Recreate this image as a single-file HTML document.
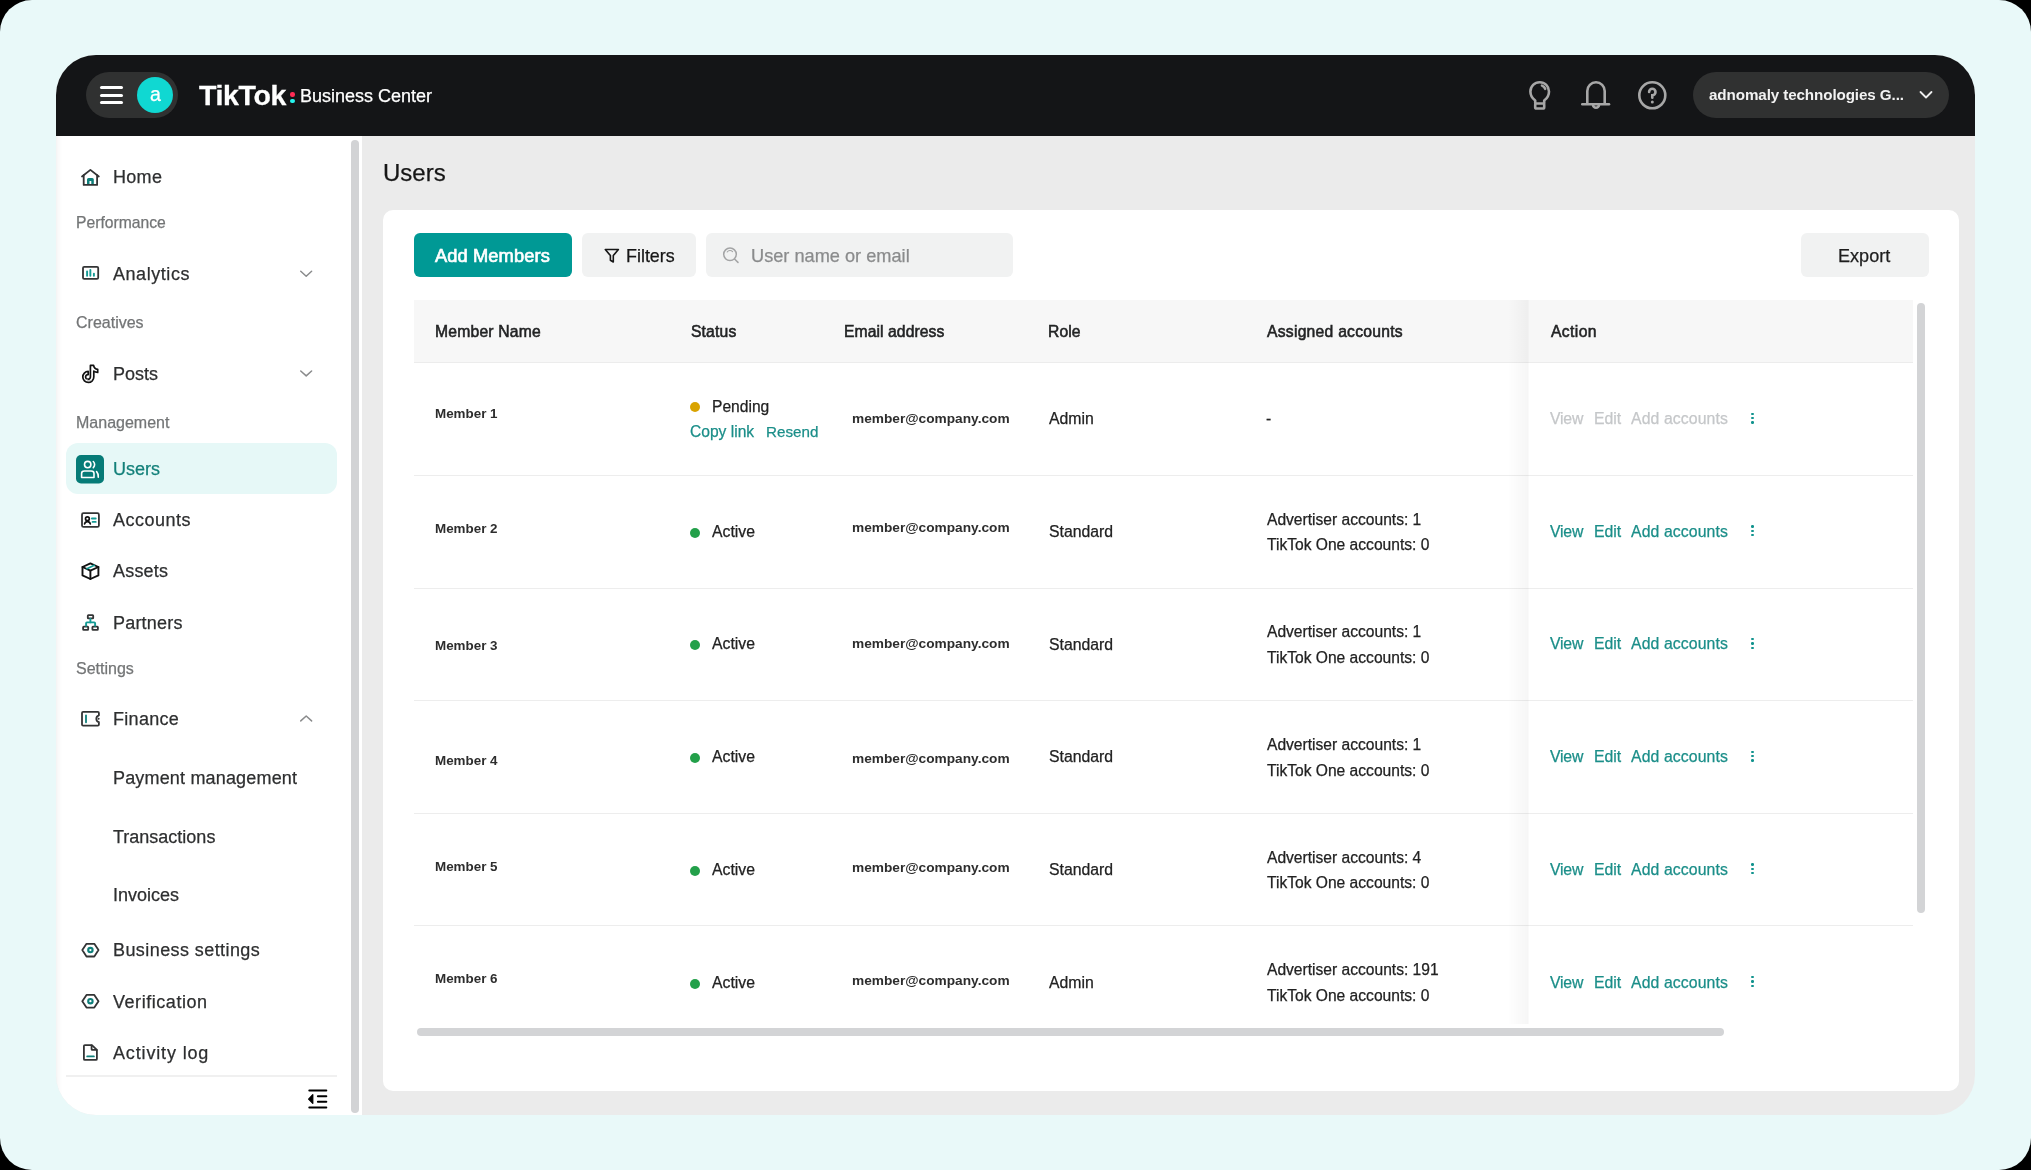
<!DOCTYPE html>
<html><head><meta charset="utf-8">
<style>
*{box-sizing:border-box;margin:0;padding:0}
html,body{width:2031px;height:1170px;overflow:hidden;background:#000;font-family:"Liberation Sans",sans-serif}
.abs{position:absolute}
.t{position:absolute;white-space:nowrap;line-height:1;will-change:transform;-webkit-text-stroke:0.25px currentColor}
svg{position:absolute;overflow:visible}
#frame{position:absolute;left:0;top:0;width:2031px;height:1170px;border-radius:32px;background:#E9F9F9;overflow:hidden}
#app{position:absolute;left:56px;top:55px;width:1919px;height:1060px;border-radius:40px;overflow:hidden;background:#EBEBEB}
#hdr{position:absolute;left:0;top:0;width:1919px;height:81px;background:#141517}
#side{position:absolute;left:0;top:81px;width:306px;height:979px;background:#fff;box-shadow:inset 7px 0 6px -6px rgba(0,0,0,0.07)}
#abs0{position:absolute;left:0;top:0;width:2031px;height:1170px}
</style></head>
<body>
<div id="frame">
<div id="app">
  <div id="hdr"></div>
  <div id="side"></div>
</div>
<div id="abs0">
<div class="abs" style="left:86px;top:72px;width:92px;height:46px;border-radius:23px;background:#303131"></div>
<div class="abs" style="left:100px;top:86px;width:23px;height:3px;border-radius:1.5px;background:#fff"></div>
<div class="abs" style="left:100px;top:94px;width:23px;height:3px;border-radius:1.5px;background:#fff"></div>
<div class="abs" style="left:100px;top:101px;width:23px;height:3px;border-radius:1.5px;background:#fff"></div>
<div class="abs" style="left:137px;top:77px;width:36px;height:36px;border-radius:50%;background:#10D8D2"></div>
<div class="t" style="left:149.8px;top:85.2px;font-size:19.6px;color:#fff">a</div>
<div class="t" style="left:199px;top:80.81px;font-size:28.5px;font-weight:700;-webkit-text-stroke:0;color:#fff;letter-spacing:-0.35px;-webkit-text-stroke:0.3px #fff">TikTok</div>
<div class="abs" style="left:290.3px;top:92.2px;width:4.4px;height:4.4px;border-radius:50%;background:#FE2C55"></div>
<div class="abs" style="left:290.3px;top:98.6px;width:4.4px;height:4.4px;border-radius:50%;background:#25F4EE"></div>
<div class="t" style="left:300px;top:87.11px;font-size:18px;color:#fff;">Business Center</div>
<svg style="left:1527px;top:79px" width="26" height="33" viewBox="0 0 26 33"><g fill="none" stroke="#A7A7A7" stroke-width="2.6" stroke-linecap="round" stroke-linejoin="round">
<path d="M8.2 24 V21.5 C5.5 19.5 3.4 16.5 3.4 12.5 A9.3 9.3 0 0 1 22 12.5 C22 16.5 19.9 19.5 17.2 21.5 V24"/>
<rect x="8.2" y="24.5" width="9" height="5" rx="1.3"/>
<path d="M15 6.6 A5.8 5.8 0 0 1 18.2 9.8"/></g></svg>
<svg style="left:1580px;top:79px" width="32" height="33" viewBox="0 0 32 33"><g fill="none" stroke="#A7A7A7" stroke-width="2.6" stroke-linecap="round" stroke-linejoin="round">
<path d="M7.3 24.5 V12 A8.7 8.7 0 0 1 24.7 12 V24.5"/><path d="M2.3 25.3 H29"/><path d="M13 25.8 A3 3 0 0 0 19 25.8"/></g></svg>
<svg style="left:1636px;top:79px" width="33" height="33" viewBox="0 0 33 33"><g fill="none" stroke="#A7A7A7" stroke-width="2.6" stroke-linecap="round">
<circle cx="16.3" cy="16.3" r="13"/><path d="M13.1 13 A3.2 3.2 0 1 1 16.3 16.2 V18.8"/></g><circle cx="16.3" cy="22.9" r="1.5" fill="#A7A7A7"/></svg>
<div class="abs" style="left:1693px;top:72px;width:256px;height:46px;border-radius:23px;background:#303131"></div>
<div class="t" style="left:1708.8px;top:87.32px;font-size:15.2px;font-weight:700;-webkit-text-stroke:0;color:#F2F2F2;letter-spacing:-0.1px">adnomaly technologies G...</div>
<svg style="left:1919px;top:90px" width="14" height="10" viewBox="0 0 14 10"><path d="M1.5 2 L7 7.5 L12.5 2" fill="none" stroke="#EDEDED" stroke-width="1.8" stroke-linecap="round" stroke-linejoin="round"/></svg>
<div class="abs" style="left:351px;top:140px;width:8px;height:973px;border-radius:4px;background:#D2D3D5"></div>
<div class="t" style="left:113px;top:167.91px;font-size:18px;color:#2E2F30;letter-spacing:0.3px">Home</div>
<div class="t" style="left:75.8px;top:215.27px;font-size:15.7px;color:#737576;">Performance</div>
<div class="t" style="left:113px;top:264.61px;font-size:18px;color:#2E2F30;letter-spacing:0.55px">Analytics</div>
<div class="t" style="left:75.5px;top:315.17px;font-size:16px;color:#737576;">Creatives</div>
<div class="t" style="left:113px;top:364.51px;font-size:18px;color:#2E2F30;">Posts</div>
<div class="t" style="left:75.5px;top:415.27px;font-size:16px;color:#737576;">Management</div>
<div class="abs" style="left:66px;top:443px;width:271px;height:51px;border-radius:12px;background:#E6F8F7"></div>
<div class="t" style="left:113px;top:460.11px;font-size:18px;color:#13807A;">Users</div>
<div class="t" style="left:113px;top:511.16px;font-size:18px;color:#2E2F30;letter-spacing:0.5px">Accounts</div>
<div class="t" style="left:113px;top:562.46px;font-size:18px;color:#2E2F30;letter-spacing:0.2px">Assets</div>
<div class="t" style="left:113px;top:613.71px;font-size:18px;color:#2E2F30;letter-spacing:0.2px">Partners</div>
<div class="t" style="left:75.5px;top:660.87px;font-size:16px;color:#737576;">Settings</div>
<div class="t" style="left:113px;top:710.16px;font-size:18px;color:#2E2F30;letter-spacing:0.3px">Finance</div>
<div class="t" style="left:113px;top:768.86px;font-size:18px;color:#2E2F30;letter-spacing:0.17px">Payment management</div>
<div class="t" style="left:113px;top:827.71px;font-size:18px;color:#2E2F30;">Transactions</div>
<div class="t" style="left:113px;top:886.36px;font-size:18px;color:#2E2F30;">Invoices</div>
<div class="t" style="left:113px;top:941.26px;font-size:18px;color:#2E2F30;letter-spacing:0.42px">Business settings</div>
<div class="t" style="left:113px;top:992.56px;font-size:18px;color:#2E2F30;letter-spacing:0.55px">Verification</div>
<div class="t" style="left:113px;top:1043.86px;font-size:18px;color:#2E2F30;letter-spacing:0.85px">Activity log</div>
<div class="abs" style="left:66px;top:1075px;width:271px;height:2px;background:#F0F0F0"></div>
<svg style="left:0;top:0" width="2031" height="1170"><path d="M300.75 271.3 L306.2 276.2 L311.6 271.3" fill="none" stroke="#8A8B8C" stroke-width="1.5" stroke-linecap="round" stroke-linejoin="round"/></svg>
<svg style="left:0;top:0" width="2031" height="1170"><path d="M300.75 371.0 L306.2 375.9 L311.6 371.0" fill="none" stroke="#8A8B8C" stroke-width="1.5" stroke-linecap="round" stroke-linejoin="round"/></svg>
<svg style="left:0;top:0" width="2031" height="1170"><path d="M300.75 720.9 L306.2 716.0 L311.6 720.9" fill="none" stroke="#8A8B8C" stroke-width="1.5" stroke-linecap="round" stroke-linejoin="round"/></svg>
<svg style="left:0;top:0" width="2031" height="1170">
<g stroke="#333435" stroke-width="1.8" fill="none" stroke-linecap="round" stroke-linejoin="round"><path d="M82 176.5 L90.4 169.9 L98.8 176.5"/><path d="M83.7 175.2 V184.9 H97.1 V175.2"/></g>
<path d="M87 184 V179.5 Q87 178 88.5 178 H92.3 Q93.8 178 93.8 179.5 V184 H91.3 V181 H89.5 V184 Z" fill="#0F7F7A"/>
<rect x="83" y="266.9" width="15.2" height="12" rx="1.2" stroke="#333435" stroke-width="1.8" fill="none" stroke-linecap="round" stroke-linejoin="round"/>
<g stroke="#139A94" stroke-width="1.9" fill="none" stroke-linecap="round" stroke-linejoin="round" stroke-width="2.1"><path d="M87.1 271.4 V275.8"/><path d="M90.35 269.9 V275.8"/><path d="M93.9 273.7 V275.8"/></g>
<path d="M90.4 365.4 H93.6 C93.9 367.6 95.5 369.1 97.7 369.4 V372.4 C96.2 372.4 94.8 371.9 93.8 371.1 V376.9 A5.5 5.5 0 1 1 88.2 371.4 V374.6 A2.4 2.4 0 1 0 90.4 377 Z" stroke="#111" stroke-width="1.7" fill="#fff" stroke-linejoin="round"/>
<path d="M86.3 378.8 A3.6 3.6 0 0 0 91.6 380.2" stroke="#BDBDBD" stroke-width="1" fill="none"/>
<rect x="76" y="455" width="28" height="28.5" rx="5" fill="#067B77"/>
<g stroke="#fff" stroke-width="1.6" fill="none" stroke-linecap="round" stroke-linejoin="round">
<circle cx="87.7" cy="464.6" r="3.2"/><path d="M93.3 461.5 A4.2 4.2 0 0 1 93.3 467.6"/>
<path d="M81.6 477.5 V473.5 Q81.6 471 84.3 471 H91.2 Q94 471 94 473.5 V477.5 Z"/><path d="M96.6 471.6 Q98.3 473.3 98.3 477.2"/></g>
<rect x="82" y="513.2" width="16.9" height="13.7" rx="1.5" stroke="#333435" stroke-width="1.8" fill="none" stroke-linecap="round" stroke-linejoin="round"/>
<g stroke="#111" stroke-width="1.7" fill="none" stroke-linecap="round"><circle cx="87.4" cy="518.7" r="1.9"/><path d="M84.6 523.9 A2.9 2.9 0 0 1 90.3 523.9"/></g>
<g stroke="#139A94" stroke-width="1.9" fill="none" stroke-linecap="round" stroke-linejoin="round" stroke-width="1.7"><path d="M91.9 518.5 H95.7"/><path d="M92.6 521.9 H95.7"/></g>
<g stroke="#111" stroke-width="1.9" fill="none" stroke-linejoin="round" stroke-linecap="round"><path d="M90.4 563.4 L98.4 567 V575.4 L90.4 579 L82.5 575.4 V567 Z"/><path d="M82.5 567 L90.4 570.6 L98.4 567"/><path d="M90.4 570.6 V579"/></g>
<path d="M86.9 568.8 L94.3 565.2" stroke="#139A94" stroke-width="1.6" stroke-linecap="round"/>
<g stroke="#333435" stroke-width="1.8" fill="none" stroke-linecap="round" stroke-linejoin="round"><rect x="87.8" y="615.1" width="5.4" height="3.2" rx="0.6"/><rect x="83.1" y="626.6" width="5.1" height="3.3" rx="0.6"/><rect x="92.4" y="626.6" width="5.5" height="3.3" rx="0.6"/></g>
<g stroke="#139A94" stroke-width="1.9" fill="none" stroke-linecap="round" stroke-linejoin="round" stroke-width="1.7" stroke-linecap="butt"><path d="M90.4 619 V622.4"/><path d="M86.1 625.7 V623.2 Q86.1 622.4 86.9 622.4 H94.2 Q95.1 622.4 95.1 623.2 V625.7"/></g>
<path d="M98.9 715.3 V713 Q98.9 711.9 97.8 711.9 H83.1 Q82 711.9 82 713 V724.5 Q82 725.6 83.1 725.6 H97.8 Q98.9 725.6 98.9 724.5 V722.2 A3.6 3.6 0 0 1 98.9 715.3" stroke="#333435" stroke-width="1.8" fill="none" stroke-linecap="round" stroke-linejoin="round"/>
<circle cx="98.6" cy="718.8" r="1" fill="#333435"/>
<path d="M86 715.5 V722.3" stroke="#0F7F7A" stroke-width="1.8" stroke-linecap="round"/>
<path d="M82.3 950.1 L86.5 943.8 H94.3 L98.5 950.1 L94.3 956.5 H86.5 Z" stroke="#333435" stroke-width="1.8" fill="none" stroke-linecap="round" stroke-linejoin="round"/>
<circle cx="90.4" cy="950.1" r="2.2" stroke="#0F7F7A" stroke-width="2.1" fill="none"/>
<path d="M82.3 1001.2 L86.5 994.9 H94.3 L98.5 1001.2 L94.3 1007.6 H86.5 Z" stroke="#333435" stroke-width="1.8" fill="none" stroke-linecap="round" stroke-linejoin="round"/>
<circle cx="90.4" cy="1001.2" r="2.2" stroke="#0F7F7A" stroke-width="2.1" fill="none"/>
<path d="M91.9 1045.1 H84.9 Q83.9 1045.1 83.9 1046.1 V1058.9 Q83.9 1059.9 84.9 1059.9 H95.9 Q96.9 1059.9 96.9 1058.9 V1049.8 Z" stroke="#333435" stroke-width="1.8" fill="none" stroke-linecap="round" stroke-linejoin="round"/>
<path d="M91.6 1045.4 V1049.2 Q91.6 1049.9 92.3 1049.9 H96.6" stroke="#333435" stroke-width="1.8" fill="none" stroke-linecap="round" stroke-linejoin="round"/>
<path d="M87.2 1056.4 H93.9" stroke="#0F7F7A" stroke-width="1.8" stroke-linecap="round"/>
<g stroke="#000" stroke-width="2" stroke-linecap="round"><path d="M309.3 1090.5 H326.3"/><path d="M317.9 1096.2 H326.3"/><path d="M317.9 1101.7 H326.3"/><path d="M309.3 1107.4 H326.3"/></g>
<path d="M312.8 1094.6 L308.6 1099.1 L312.8 1103.4 Z" fill="#000" stroke="#000" stroke-width="1.2" stroke-linejoin="round"/>
</svg>
<div class="t" style="left:382.5px;top:160.68px;font-size:24px;color:#161616;">Users</div>
<div class="abs" style="left:383px;top:210px;width:1576px;height:881px;border-radius:10px;background:#fff"></div>
<div class="abs" style="left:414px;top:233px;width:158px;height:44px;border-radius:6px;background:#009995"></div>
<div class="t" style="left:434.6px;top:246.76px;font-size:18.3px;color:#fff;letter-spacing:0.1px;-webkit-text-stroke:0.65px #fff">Add Members</div>
<div class="abs" style="left:582px;top:233px;width:114px;height:44px;border-radius:6px;background:#F1F2F2"></div>
<svg style="left:0;top:0" width="2031" height="1170"><path d="M605.3 249.5 H618.4 L613.3 255.6 V262 L610.4 260.3 V255.6 Z" fill="none" stroke="#161616" stroke-width="1.6" stroke-linejoin="round"/></svg>
<div class="t" style="left:626px;top:247.96px;font-size:17.9px;color:#161616;">Filters</div>
<div class="abs" style="left:706px;top:233px;width:307px;height:44px;border-radius:6px;background:#F1F2F2"></div>
<svg style="left:0;top:0" width="2031" height="1170"><g fill="none" stroke="#A3A4A5" stroke-width="1.5" stroke-linecap="round"><circle cx="730" cy="254.3" r="6.3"/><path d="M734.8 259.3 L738 262.4"/><path d="M727.2 252 A3.6 3.6 0 0 1 732.6 251.6" stroke-width="1.1"/></g></svg>
<div class="t" style="left:751px;top:246.61px;font-size:18.2px;color:#8A8B8C;">User name or email</div>
<div class="abs" style="left:1801px;top:233px;width:128px;height:44px;border-radius:6px;background:#F1F2F2"></div>
<div class="t" style="left:1837.8px;top:247.06px;font-size:18.1px;color:#1E1E1E;">Export</div>
<div class="abs" style="left:414px;top:300px;width:1499px;height:63px;background:#F7F7F7;border-bottom:1px solid #ECECEC"></div>
<div class="t" style="left:434.6px;top:324.07px;font-size:15.7px;color:#222324;letter-spacing:0.2px;-webkit-text-stroke:0.55px #222324">Member Name</div>
<div class="t" style="left:690.6px;top:324.07px;font-size:15.7px;color:#222324;letter-spacing:0.15px;-webkit-text-stroke:0.55px #222324">Status</div>
<div class="t" style="left:844.0px;top:324.07px;font-size:15.7px;color:#222324;letter-spacing:0.08px;-webkit-text-stroke:0.55px #222324">Email address</div>
<div class="t" style="left:1048.3px;top:324.07px;font-size:15.7px;color:#222324;letter-spacing:0.05px;-webkit-text-stroke:0.55px #222324">Role</div>
<div class="t" style="left:1266.5px;top:324.07px;font-size:15.7px;color:#222324;letter-spacing:0.25px;-webkit-text-stroke:0.55px #222324">Assigned accounts</div>
<div class="t" style="left:1550.6px;top:324.07px;font-size:15.7px;color:#222324;letter-spacing:0.38px;-webkit-text-stroke:0.55px #222324">Action</div>
<div class="abs" style="left:414px;top:475px;width:1499px;height:1px;background:#EDEDED"></div>
<div class="abs" style="left:414px;top:588px;width:1499px;height:1px;background:#EDEDED"></div>
<div class="abs" style="left:414px;top:700px;width:1499px;height:1px;background:#EDEDED"></div>
<div class="abs" style="left:414px;top:813px;width:1499px;height:1px;background:#EDEDED"></div>
<div class="abs" style="left:414px;top:925px;width:1499px;height:1px;background:#EDEDED"></div>
<div class="abs" style="left:1508px;top:300px;width:20px;height:724px;background:linear-gradient(to right, rgba(0,0,0,0), rgba(0,0,0,0.035))"></div>
<div class="abs" style="left:1528px;top:300px;width:1px;height:724px;background:rgba(0,0,0,0.02)"></div>
<div class="t" style="left:435.3px;top:406.53px;font-size:13.4px;font-weight:700;-webkit-text-stroke:0;color:#2D2D2D;">Member 1</div>
<div class="abs" style="left:690px;top:402.4px;width:10px;height:10px;border-radius:50%;background:#D9A300"></div>
<div class="t" style="left:711.5px;top:398.52px;font-size:15.6px;color:#222;">Pending</div>
<div class="t" style="left:690px;top:423.52px;font-size:15.6px;color:#1B8E89;">Copy link</div>
<div class="t" style="left:765.5px;top:423.72px;font-size:15.2px;color:#1B8E89;">Resend</div>
<div class="t" style="left:852.3px;top:412.42px;font-size:13.7px;font-weight:700;-webkit-text-stroke:0;color:#2D2D2D">member@company.com</div>
<div class="t" style="left:1048.8px;top:411.22px;font-size:15.8px;color:#222;">Admin</div>
<div class="t" style="left:1266px;top:410.77px;font-size:15.7px;color:#222;">-</div>
<div class="t" style="left:1549.6px;top:411.02px;font-size:15.8px;color:#C5C7C9;letter-spacing:-0.2px">View</div>
<div class="t" style="left:1593.8px;top:411.02px;font-size:15.8px;color:#C5C7C9;">Edit</div>
<div class="t" style="left:1631.3px;top:411.02px;font-size:15.8px;color:#C5C7C9;letter-spacing:0.1px">Add accounts</div>
<div class="abs" style="left:1751.3px;top:412.6px;width:2.4px;height:2.4px;border-radius:50%;background:#11938E"></div>
<div class="abs" style="left:1751.3px;top:416.9px;width:2.4px;height:2.4px;border-radius:50%;background:#11938E"></div>
<div class="abs" style="left:1751.3px;top:421.2px;width:2.4px;height:2.4px;border-radius:50%;background:#11938E"></div>
<div class="t" style="left:435.3px;top:521.53px;font-size:13.4px;font-weight:700;-webkit-text-stroke:0;color:#2D2D2D;">Member 2</div>
<div class="abs" style="left:690px;top:527.6px;width:10px;height:10px;border-radius:50%;background:#23A04A"></div>
<div class="t" style="left:711.5px;top:523.62px;font-size:15.8px;color:#222;">Active</div>
<div class="t" style="left:852.3px;top:520.82px;font-size:13.7px;font-weight:700;-webkit-text-stroke:0;color:#2D2D2D">member@company.com</div>
<div class="t" style="left:1048.8px;top:524.02px;font-size:15.8px;color:#222;">Standard</div>
<div class="t" style="left:1266.6px;top:511.72px;font-size:15.6px;color:#222;">Advertiser accounts: 1</div>
<div class="t" style="left:1266.6px;top:537.22px;font-size:15.6px;color:#222;">TikTok One accounts: 0</div>
<div class="t" style="left:1549.6px;top:523.82px;font-size:15.8px;color:#1B8E89;letter-spacing:-0.2px">View</div>
<div class="t" style="left:1593.8px;top:523.82px;font-size:15.8px;color:#1B8E89;">Edit</div>
<div class="t" style="left:1631.3px;top:523.82px;font-size:15.8px;color:#1B8E89;letter-spacing:0.1px">Add accounts</div>
<div class="abs" style="left:1751.3px;top:525.4px;width:2.4px;height:2.4px;border-radius:50%;background:#11938E"></div>
<div class="abs" style="left:1751.3px;top:529.7px;width:2.4px;height:2.4px;border-radius:50%;background:#11938E"></div>
<div class="abs" style="left:1751.3px;top:534.0px;width:2.4px;height:2.4px;border-radius:50%;background:#11938E"></div>
<div class="t" style="left:435.3px;top:638.63px;font-size:13.4px;font-weight:700;-webkit-text-stroke:0;color:#2D2D2D;">Member 3</div>
<div class="abs" style="left:690px;top:640.3px;width:10px;height:10px;border-radius:50%;background:#23A04A"></div>
<div class="t" style="left:711.5px;top:636.32px;font-size:15.8px;color:#222;">Active</div>
<div class="t" style="left:852.3px;top:636.52px;font-size:13.7px;font-weight:700;-webkit-text-stroke:0;color:#2D2D2D">member@company.com</div>
<div class="t" style="left:1048.8px;top:636.62px;font-size:15.8px;color:#222;">Standard</div>
<div class="t" style="left:1266.6px;top:624.32px;font-size:15.6px;color:#222;">Advertiser accounts: 1</div>
<div class="t" style="left:1266.6px;top:649.82px;font-size:15.6px;color:#222;">TikTok One accounts: 0</div>
<div class="t" style="left:1549.6px;top:636.42px;font-size:15.8px;color:#1B8E89;letter-spacing:-0.2px">View</div>
<div class="t" style="left:1593.8px;top:636.42px;font-size:15.8px;color:#1B8E89;">Edit</div>
<div class="t" style="left:1631.3px;top:636.42px;font-size:15.8px;color:#1B8E89;letter-spacing:0.1px">Add accounts</div>
<div class="abs" style="left:1751.3px;top:638.0px;width:2.4px;height:2.4px;border-radius:50%;background:#11938E"></div>
<div class="abs" style="left:1751.3px;top:642.3px;width:2.4px;height:2.4px;border-radius:50%;background:#11938E"></div>
<div class="abs" style="left:1751.3px;top:646.6px;width:2.4px;height:2.4px;border-radius:50%;background:#11938E"></div>
<div class="t" style="left:435.3px;top:753.53px;font-size:13.4px;font-weight:700;-webkit-text-stroke:0;color:#2D2D2D;">Member 4</div>
<div class="abs" style="left:690px;top:752.8px;width:10px;height:10px;border-radius:50%;background:#23A04A"></div>
<div class="t" style="left:711.5px;top:748.82px;font-size:15.8px;color:#222;">Active</div>
<div class="t" style="left:852.3px;top:751.92px;font-size:13.7px;font-weight:700;-webkit-text-stroke:0;color:#2D2D2D">member@company.com</div>
<div class="t" style="left:1048.8px;top:749.32px;font-size:15.8px;color:#222;">Standard</div>
<div class="t" style="left:1266.6px;top:737.02px;font-size:15.6px;color:#222;">Advertiser accounts: 1</div>
<div class="t" style="left:1266.6px;top:762.52px;font-size:15.6px;color:#222;">TikTok One accounts: 0</div>
<div class="t" style="left:1549.6px;top:749.12px;font-size:15.8px;color:#1B8E89;letter-spacing:-0.2px">View</div>
<div class="t" style="left:1593.8px;top:749.12px;font-size:15.8px;color:#1B8E89;">Edit</div>
<div class="t" style="left:1631.3px;top:749.12px;font-size:15.8px;color:#1B8E89;letter-spacing:0.1px">Add accounts</div>
<div class="abs" style="left:1751.3px;top:750.7px;width:2.4px;height:2.4px;border-radius:50%;background:#11938E"></div>
<div class="abs" style="left:1751.3px;top:755.0px;width:2.4px;height:2.4px;border-radius:50%;background:#11938E"></div>
<div class="abs" style="left:1751.3px;top:759.3px;width:2.4px;height:2.4px;border-radius:50%;background:#11938E"></div>
<div class="t" style="left:435.3px;top:859.53px;font-size:13.4px;font-weight:700;-webkit-text-stroke:0;color:#2D2D2D;">Member 5</div>
<div class="abs" style="left:690px;top:865.5px;width:10px;height:10px;border-radius:50%;background:#23A04A"></div>
<div class="t" style="left:711.5px;top:861.52px;font-size:15.8px;color:#222;">Active</div>
<div class="t" style="left:852.3px;top:860.52px;font-size:13.7px;font-weight:700;-webkit-text-stroke:0;color:#2D2D2D">member@company.com</div>
<div class="t" style="left:1048.8px;top:862.02px;font-size:15.8px;color:#222;">Standard</div>
<div class="t" style="left:1266.6px;top:849.72px;font-size:15.6px;color:#222;">Advertiser accounts: 4</div>
<div class="t" style="left:1266.6px;top:875.22px;font-size:15.6px;color:#222;">TikTok One accounts: 0</div>
<div class="t" style="left:1549.6px;top:861.82px;font-size:15.8px;color:#1B8E89;letter-spacing:-0.2px">View</div>
<div class="t" style="left:1593.8px;top:861.82px;font-size:15.8px;color:#1B8E89;">Edit</div>
<div class="t" style="left:1631.3px;top:861.82px;font-size:15.8px;color:#1B8E89;letter-spacing:0.1px">Add accounts</div>
<div class="abs" style="left:1751.3px;top:863.4px;width:2.4px;height:2.4px;border-radius:50%;background:#11938E"></div>
<div class="abs" style="left:1751.3px;top:867.7px;width:2.4px;height:2.4px;border-radius:50%;background:#11938E"></div>
<div class="abs" style="left:1751.3px;top:872.0px;width:2.4px;height:2.4px;border-radius:50%;background:#11938E"></div>
<div class="t" style="left:435.3px;top:971.93px;font-size:13.4px;font-weight:700;-webkit-text-stroke:0;color:#2D2D2D;">Member 6</div>
<div class="abs" style="left:690px;top:978.5px;width:10px;height:10px;border-radius:50%;background:#23A04A"></div>
<div class="t" style="left:711.5px;top:974.52px;font-size:15.8px;color:#222;">Active</div>
<div class="t" style="left:852.3px;top:973.52px;font-size:13.7px;font-weight:700;-webkit-text-stroke:0;color:#2D2D2D">member@company.com</div>
<div class="t" style="left:1048.8px;top:974.72px;font-size:15.8px;color:#222;">Admin</div>
<div class="t" style="left:1266.6px;top:962.42px;font-size:15.6px;color:#222;">Advertiser accounts: 191</div>
<div class="t" style="left:1266.6px;top:987.92px;font-size:15.6px;color:#222;">TikTok One accounts: 0</div>
<div class="t" style="left:1549.6px;top:974.52px;font-size:15.8px;color:#1B8E89;letter-spacing:-0.2px">View</div>
<div class="t" style="left:1593.8px;top:974.52px;font-size:15.8px;color:#1B8E89;">Edit</div>
<div class="t" style="left:1631.3px;top:974.52px;font-size:15.8px;color:#1B8E89;letter-spacing:0.1px">Add accounts</div>
<div class="abs" style="left:1751.3px;top:976.1px;width:2.4px;height:2.4px;border-radius:50%;background:#11938E"></div>
<div class="abs" style="left:1751.3px;top:980.4px;width:2.4px;height:2.4px;border-radius:50%;background:#11938E"></div>
<div class="abs" style="left:1751.3px;top:984.7px;width:2.4px;height:2.4px;border-radius:50%;background:#11938E"></div>
<div class="abs" style="left:417px;top:1028px;width:1307px;height:8px;border-radius:4px;background:#D3D4D6"></div>
<div class="abs" style="left:1917px;top:303px;width:8px;height:610px;border-radius:4px;background:#D3D4D6"></div>
</div>
</div>
</body></html>
